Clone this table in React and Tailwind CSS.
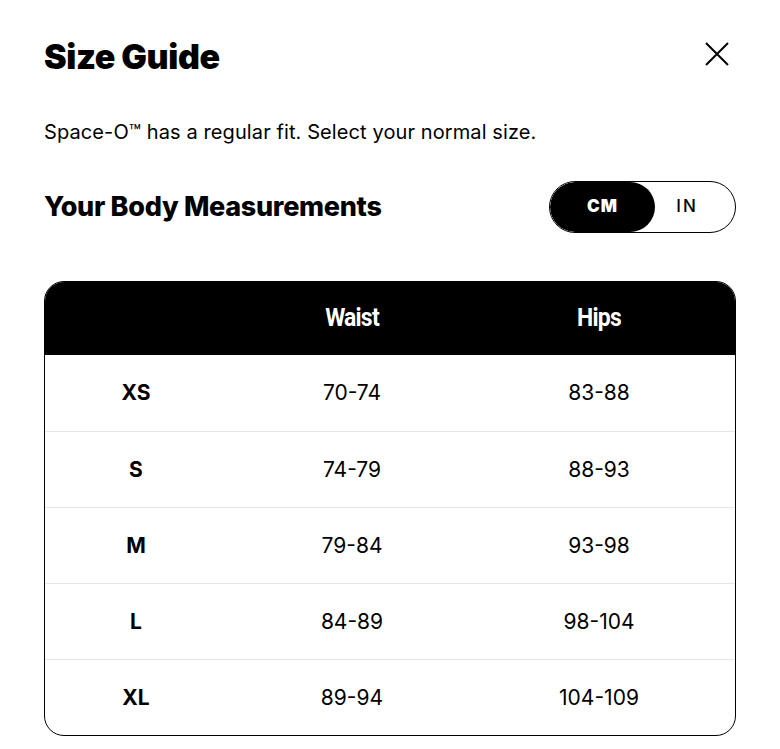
const rows = [
  { size: 'XS', waist: '70-74', hips: '83-88' },
  { size: 'S', waist: '74-79', hips: '88-93' },
  { size: 'M', waist: '79-84', hips: '93-98' },
  { size: 'L', waist: '84-89', hips: '98-104' },
  { size: 'XL', waist: '89-94', hips: '104-109' },
];

export default function App() {
  return (
    <div className="min-h-screen bg-white text-black px-[44px] font-['Inter',sans-serif]">
      {/* header */}
      <div className="flex items-center justify-between pt-[36px]">
        <h1 className="text-[34px] font-black tracking-[-0.4px] leading-[42px]">Size Guide</h1>
        <button className="mr-[7px] -mt-[6px]">
          <svg width="24" height="24" viewBox="0 0 24 24" fill="none" stroke="black" strokeWidth="2">
            <path d="M1 1L23 23M23 1L1 23" />
          </svg>
        </button>
      </div>

      <p className="mt-[40px] text-[20px] leading-[28px] tracking-[0.1px]">Space-O™ has a regular fit. Select your normal size.</p>

      <div className="flex items-center justify-between mt-[35px]">
        <h2 className="text-[27px] font-extrabold tracking-[-0.3px]">Your Body Measurements</h2>
        <div className="flex w-[187px] h-[52px] rounded-full border border-black overflow-hidden">
          <button className="w-[105px] h-full rounded-full bg-black text-white text-[17px] font-black tracking-[1px]">CM</button>
          <button className="flex-1 h-full pr-[16px] text-[17px] font-medium tracking-[2px]">IN</button>
        </div>
      </div>

      {/* table */}
      <div className="mt-[48px] border border-black rounded-[20px] overflow-hidden">
        <div className="grid grid-cols-[182px_250px_1fr] bg-black text-white h-[73px] items-center pr-[14px]">
          <div />
          <div className="text-center text-[23px] font-bold font-['Roboto',sans-serif] tracking-[-0.8px] scale-y-110">Waist</div>
          <div className="text-center text-[23px] font-bold font-['Roboto',sans-serif] tracking-[-0.8px] scale-y-110">Hips</div>
        </div>
        {rows.map((r, i) => (
          <div
            key={r.size}
            className={`grid grid-cols-[182px_250px_1fr] h-[76px] items-center pr-[14px] text-[21px] ${i > 0 ? 'border-t border-[#e6e6e6]' : ''}`}
          >
            <div className="text-center font-bold">{r.size}</div>
            <div className="text-center">{r.waist}</div>
            <div className="text-center">{r.hips}</div>
          </div>
        ))}
      </div>
    </div>
  );
}
